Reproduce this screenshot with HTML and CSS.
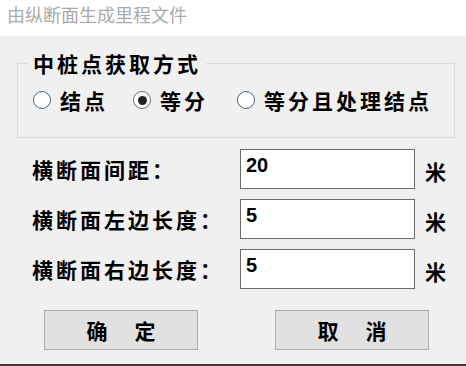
FILE: index.html
```html
<!DOCTYPE html>
<html lang="zh">
<head>
<meta charset="utf-8">
<title>由纵断面生成里程文件</title>
<link rel="stylesheet" href="styles.css">
</head>
<body>
<div class="window">
  <div class="titlebar">由纵断面生成里程文件</div>
  <div class="dialog">
    <fieldset class="group">
      <legend class="group-title">中桩点获取方式</legend>
      <div class="radios">
        <label class="radio"><span class="dot"></span><span class="radio-text">结点</span></label>
        <label class="radio"><span class="dot checked"></span><span class="radio-text">等分</span></label>
        <label class="radio"><span class="dot"></span><span class="radio-text">等分且处理结点</span></label>
      </div>
    </fieldset>
    <div class="fields">
      <div class="field">
        <span class="field-label">横断面间距：</span>
        <div class="input">20</div>
        <span class="unit">米</span>
      </div>
      <div class="field">
        <span class="field-label">横断面左边长度：</span>
        <div class="input">5</div>
        <span class="unit">米</span>
      </div>
      <div class="field">
        <span class="field-label">横断面右边长度：</span>
        <div class="input">5</div>
        <span class="unit">米</span>
      </div>
    </div>
    <div class="buttons">
      <button class="btn">确　定</button>
      <button class="btn">取　消</button>
    </div>
  </div>
</div>
</body>
</html>
```
FILE: styles.css
```css
html, body {
  margin: 0;
  padding: 0;
}
body {
  width: 466px;
  height: 366px;
  overflow: hidden;
  background: #ffffff;
  font-family: "Noto Sans CJK SC", "Noto Sans", sans-serif;
}
.window {
  display: flex;
  flex-direction: column;
  height: 366px;
}
.titlebar {
  height: 36px;
  line-height: 28px;
  padding-left: 7px;
  font-size: 18px;
  color: #aaaaaa;
  background: #ffffff;
  box-sizing: border-box;
}
.dialog {
  flex: 1;
  background: #f0f0f0;
  border-bottom: 2px solid #3a3a3a;
  display: flex;
  flex-direction: column;
  padding-top: 16px;
}
.group {
  margin: 0 11px 0 17px;
  border: 1px solid #dcdcdc;
  padding: 15px 0 26px 10px;
}
.group-title {
  padding: 0 5px;
  font-size: 21px;
  font-weight: 700;
  letter-spacing: 3px;
  line-height: 22px;
  color: #000;
}
.radios {
  display: grid;
  grid-template-columns: 100px 104px auto;
  margin-left: 5px;
  height: 22px;
  align-items: center;
}
.radio {
  display: flex;
  align-items: center;
  gap: 9px;
}
.dot {
  width: 18px;
  height: 18px;
  box-sizing: border-box;
  border: 1px solid #4b6580;
  border-radius: 50%;
  background: #ffffff;
  display: flex;
  align-items: center;
  justify-content: center;
}
.dot.checked {
  border-color: #6f6f6f;
}
.dot.checked::after {
  content: "";
  width: 9px;
  height: 9px;
  border-radius: 50%;
  background: #222;
}
.radio-text {
  font-size: 21px;
  font-weight: 700;
  letter-spacing: 3px;
  line-height: 22px;
  color: #000;
}
.fields {
  display: flex;
  flex-direction: column;
  gap: 10px;
  margin-top: 11px;
}
.field {
  display: flex;
  align-items: center;
  height: 40px;
}
.field-label {
  width: 208px;
  padding-left: 32px;
  font-size: 21px;
  font-weight: 700;
  letter-spacing: 3px;
  color: #000;
}
.input {
  width: 175px;
  height: 40px;
  box-sizing: border-box;
  border: 1px solid #6b6b6b;
  background: #ffffff;
  padding: 4px 0 0 5px;
  font-family: "Liberation Sans", "Noto Sans", sans-serif;
  font-weight: 700;
  font-size: 20px;
  line-height: 22px;
  color: #000;
}
.unit {
  margin-left: 10px;
  margin-top: 4px;
  font-size: 21px;
  font-weight: 700;
  color: #000;
}
.buttons {
  display: flex;
  margin-top: 21px;
  padding-left: 44px;
  gap: 77px;
}
.btn {
  width: 154px;
  height: 40px;
  box-sizing: border-box;
  border: 1px solid #adadad;
  background: #e1e1e1;
  font-family: "Noto Sans CJK SC", "Noto Sans", sans-serif;
  font-size: 21px;
  font-weight: 700;
  letter-spacing: 3px;
  padding: 0 0 0 3px;
  color: #000;
}
```
